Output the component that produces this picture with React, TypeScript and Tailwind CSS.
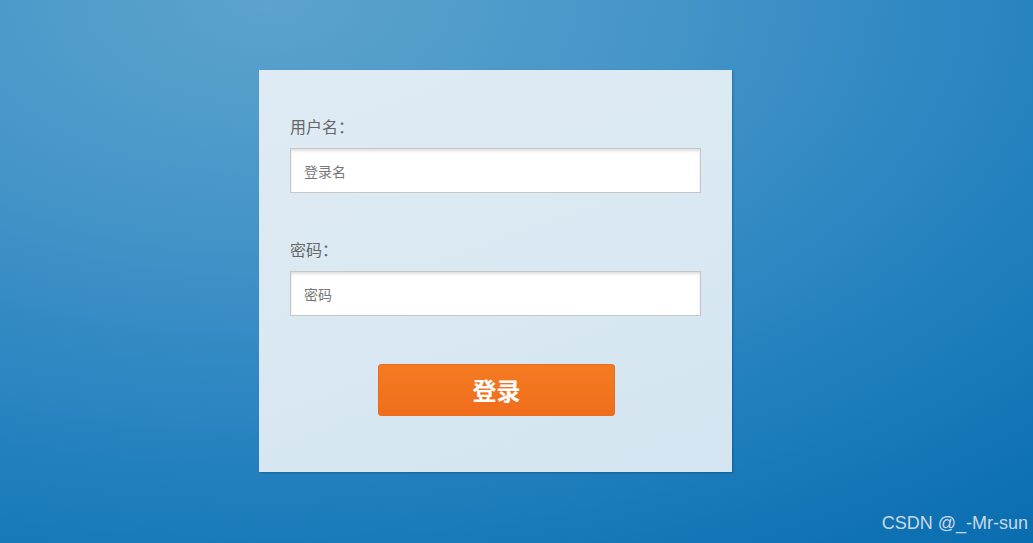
export default function App() {
  return (
    <div className="relative h-[543px] w-[1033px] overflow-hidden bg-[radial-gradient(ellipse_120%_130%_at_26%_0%,#5ca3ce_0%,#4796c8_30%,#2783c0_62%,#076caf_100%)] font-['Noto_Sans_CJK_SC',sans-serif]">
      <div className="flex pl-[259px] pt-[70px]">
        <form className="flex w-[473px] flex-col bg-[linear-gradient(160deg,#dfebf4_0%,#d9e8f2_55%,#d4e5f1_100%)] px-[31px] pb-[56px] pt-[44px] shadow-[1px_1px_2px_rgba(0,40,80,0.35)]">
          <label className="text-[16px] leading-6 text-[#666]">用户名：</label>
          <input
            placeholder="登录名"
            className="mt-[10px] h-[45px] w-[411px] border border-[#c6c6c6] bg-white px-[13px] text-[14px] text-[#555] shadow-[inset_0_2px_3px_rgba(0,0,0,0.13)] outline-none placeholder:text-[#777]"
          />
          <label className="mt-[44px] text-[16px] leading-6 text-[#666]">密码：</label>
          <input
            type="password"
            placeholder="密码"
            className="mt-[10px] h-[45px] w-[411px] border border-[#c6c6c6] bg-white px-[13px] text-[14px] text-[#555] shadow-[inset_0_2px_3px_rgba(0,0,0,0.13)] outline-none placeholder:text-[#777]"
          />
          <button
            type="button"
            className="ml-[88px] mt-[48px] h-[52px] w-[237px] rounded-[3px] border border-[#ec6a1a] bg-[linear-gradient(180deg,#f47b22_0%,#f06d1c_100%)] text-[24px] font-bold text-white"
          >
            登录
          </button>
        </form>
      </div>
      <div className="absolute bottom-[6px] right-[5px] font-['Liberation_Sans',sans-serif] text-[18px] text-[#c9d9e6]">
        CSDN @_-Mr-sun
      </div>
    </div>
  );
}
